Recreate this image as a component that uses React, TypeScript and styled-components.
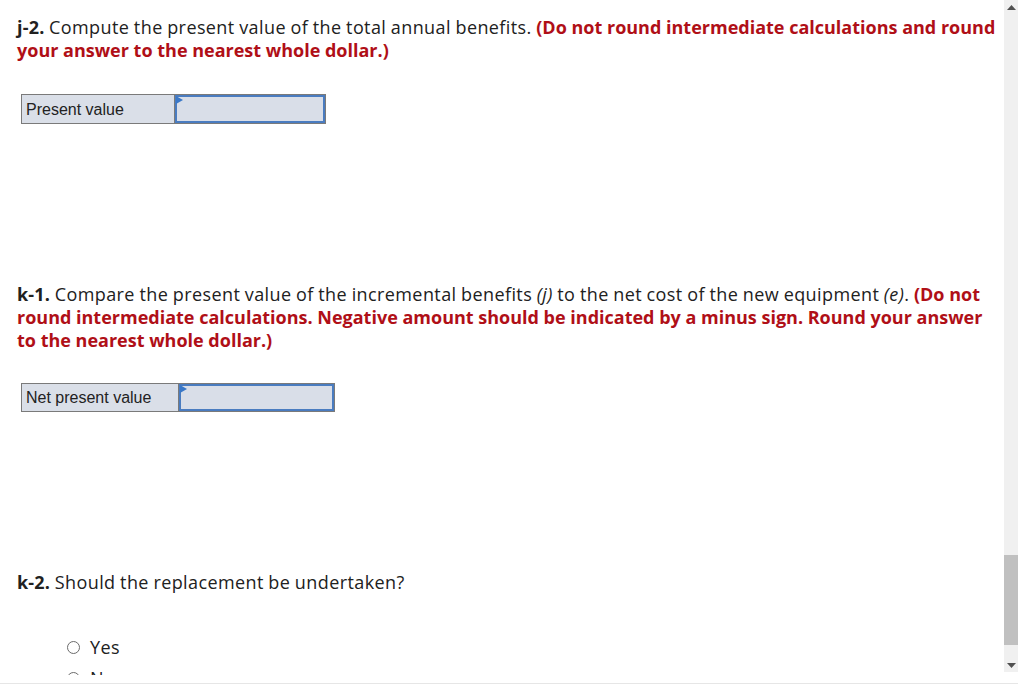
import * as React from "react";
import styled, { createGlobalStyle } from "styled-components";

const GlobalStyle = createGlobalStyle`
  html, body {
    margin: 0;
    padding: 0;
    background: #fff;
  }
  body {
    font-family: "Open Sans", "Liberation Sans", sans-serif;
    color: #212121;
  }
`;

const Page = styled.div`
  display: flex;
  flex-direction: column;
  width: 1018px;
  height: 692px;
  overflow: hidden;
`;

const Viewport = styled.div`
  display: flex;
  height: 675px;
  overflow: hidden;
`;

const Footer = styled.div`
  height: 8px;
  border-bottom: 1px solid #e6e6e6;
`;

const Content = styled.div`
  flex: 1;
  padding: 16px 4px 0 17px;
  overflow: hidden;
`;

const Question = styled.p<{ $top?: number }>`
  margin: ${(p) => p.$top ?? 0}px 0 0;
  font-size: 18px;
  line-height: 23px;
  letter-spacing: 0.4px;
  word-spacing: -0.5px;
`;

const Tag = styled.b`
  font-weight: 700;
  letter-spacing: 0.2px;
`;

const Note = styled.span`
  color: #b00f17;
  font-weight: 700;
  letter-spacing: 0;
  word-spacing: 0;
`;

const Ref = styled.i`
  font-style: italic;
`;

const AnswerTable = styled.div<{ $top: number; $height: number }>`
  display: flex;
  margin: ${(p) => p.$top}px 0 0 4px;
  height: ${(p) => p.$height}px;
  width: fit-content;
  border: 1px solid #7a7a7a;
  box-sizing: border-box;
  background: #dadfe8;
`;

const LabelCell = styled.div<{ $width: number }>`
  width: ${(p) => p.$width}px;
  display: flex;
  align-items: center;
  padding: 1px 0 0 4px;
  box-sizing: border-box;
  border-right: 1px solid #7a7a7a;
  font-family: "Liberation Sans", Arial, sans-serif;
  font-size: 16px;
  color: #222;
`;

const InputCell = styled.div<{ $width: number }>`
  position: relative;
  width: ${(p) => p.$width}px;
  box-sizing: border-box;
  border: 2px solid #4a7cc0;
  background: #d9dee8;
`;

const Corner = styled.span`
  position: absolute;
  left: 0;
  top: 0;
  width: 0;
  height: 0;
  border-top: 4px solid transparent;
  border-bottom: 4px solid transparent;
  border-left: 7px solid #3a78c8;
  transform: translate(-1px, -1px);
`;

const Options = styled.div`
  display: flex;
  flex-direction: column;
  gap: 8px;
  margin: 42px 0 0 50px;
`;

const Option = styled.label`
  display: flex;
  align-items: center;
  gap: 10px;
  font-size: 18px;
  line-height: 23px;
  letter-spacing: 0.4px;
`;

const Radio = styled.span`
  width: 13px;
  height: 13px;
  border: 1.5px solid #6b6b6b;
  border-radius: 50%;
  box-sizing: border-box;
`;

const ScrollTrack = styled.div`
  width: 14px;
  height: 672px;
  background: #f0f0f0;
  display: flex;
  flex-direction: column;
  align-items: center;
`;

const ArrowBtn = styled.div`
  height: 14px;
  display: flex;
  align-items: center;
  justify-content: center;
`;

const TrackSpace = styled.div<{ $h: number }>`
  height: ${(p) => p.$h}px;
`;

const Thumb = styled.div`
  width: 14px;
  height: 90px;
  background: #c0c0c0;
`;

const Answer = ({
  label,
  labelWidth,
  inputWidth,
  top,
  height,
}: {
  label: string;
  labelWidth: number;
  inputWidth: number;
  top: number;
  height: number;
}) => (
  <AnswerTable $top={top} $height={height}>
    <LabelCell $width={labelWidth}>{label}</LabelCell>
    <InputCell $width={inputWidth}>
      <Corner />
    </InputCell>
  </AnswerTable>
);

const App = () => {
  return (
    <>
      <GlobalStyle />
      <Page>
        <Viewport>
          <Content>
            <Question>
              <Tag>j-2.</Tag> Compute the present value of the total annual
              benefits.{" "}
              <Note>
                (Do not round intermediate calculations and round your answer
                to the nearest whole dollar.)
              </Note>
            </Question>
            <Answer
              label="Present value"
              labelWidth={153}
              inputWidth={150}
              top={32}
              height={30}
            />
            <Question $top={159}>
              <Tag>k-1.</Tag> Compare the present value of the incremental
              benefits <Ref>(j)</Ref> to the net cost of the new equipment{" "}
              <Ref>(e)</Ref>.{" "}
              <Note>
                (Do not round intermediate calculations. Negative amount should
                be indicated by a minus sign. Round your answer to the nearest
                whole dollar.)
              </Note>
            </Question>
            <Answer
              label="Net present value"
              labelWidth={157}
              inputWidth={155}
              top={31}
              height={29}
            />
            <Question $top={159}>
              <Tag>k-2.</Tag> Should the replacement be undertaken?
            </Question>
            <Options>
              <Option>
                <Radio />
                Yes
              </Option>
              <Option>
                <Radio />
                No
              </Option>
            </Options>
          </Content>
          <ScrollTrack>
            <ArrowBtn>
              <svg width="9" height="5" viewBox="0 0 9 5">
                <path d="M0 5 L4.5 0 L9 5 Z" fill="#505050" />
              </svg>
            </ArrowBtn>
            <TrackSpace $h={541} />
            <Thumb />
            <TrackSpace $h={13} />
            <ArrowBtn>
              <svg width="9" height="5" viewBox="0 0 9 5">
                <path d="M0 0 L4.5 5 L9 0 Z" fill="#505050" />
              </svg>
            </ArrowBtn>
          </ScrollTrack>
        </Viewport>
        <Footer />
      </Page>
    </>
  );
};

export default App;
